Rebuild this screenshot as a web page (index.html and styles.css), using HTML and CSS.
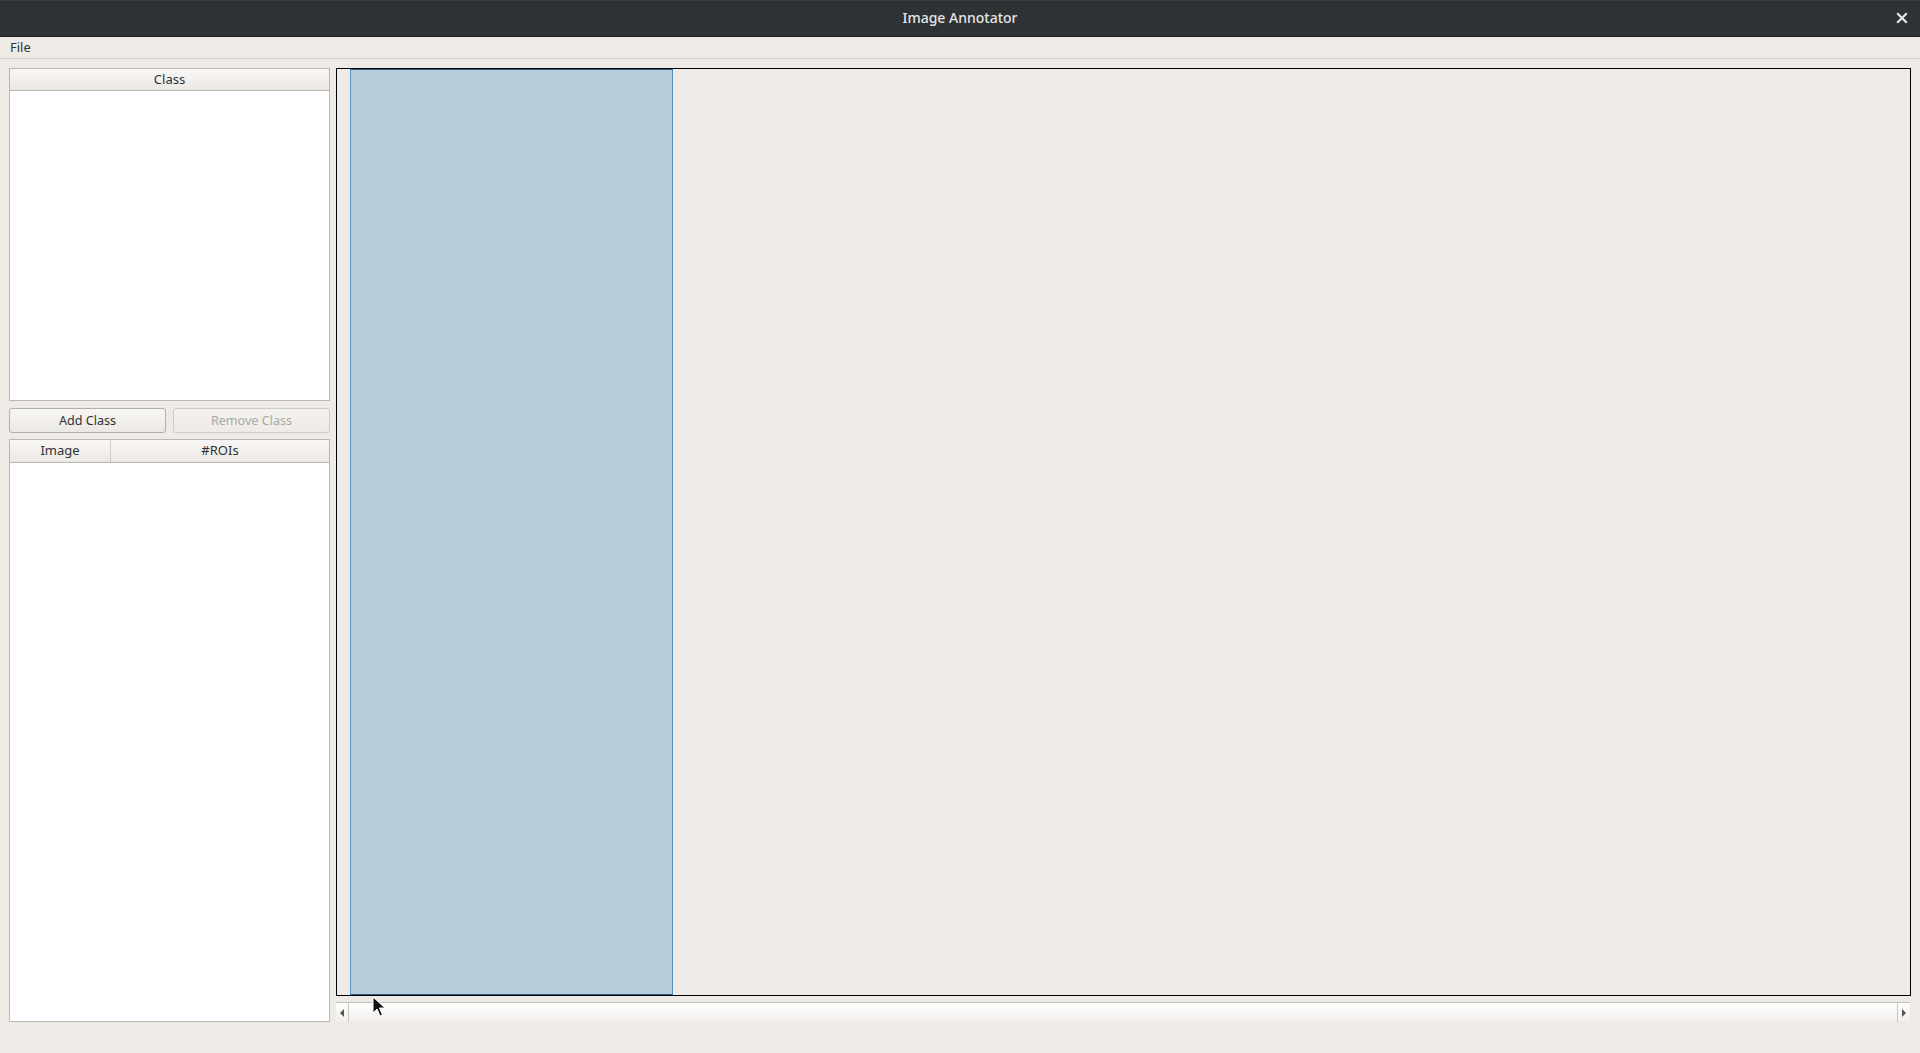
FILE: index.html
```html
<!DOCTYPE html>
<html lang="en">
<head>
    <meta charset="UTF-8">
    <meta name="viewport" content="width=device-width, initial-scale=1.0">
    <title>Image Annotator</title>
    <link rel="stylesheet" href="styles.css">
</head>
<body>
    <div class="titlebar">
        <span class="title">Image Annotator</span>
        <svg class="close-btn" width="12" height="12" viewBox="0 0 12 12">
            <path d="M2 2 L10 10 M10 2 L2 10" stroke="#e6e6e4" stroke-width="2.2" stroke-linecap="square"/>
        </svg>
    </div>
    <div class="menubar">
        <span class="menu-item">File</span>
    </div>
    <div class="main">
        <div class="side">
            <div class="class-list">
                <div class="header">
                    <div class="header-cell">Class</div>
                </div>
                <div class="list-body"></div>
            </div>
            <div class="button-row">
                <button class="btn">Add Class</button>
                <button class="btn" disabled>Remove Class</button>
            </div>
            <div class="image-table">
                <div class="header">
                    <div class="header-cell col-image">Image</div>
                    <div class="header-cell col-rois">#ROIs</div>
                </div>
                <div class="list-body"></div>
            </div>
        </div>
        <div class="view">
            <div class="canvas">
                <div class="roi"></div>
            </div>
            <div class="hscroll">
                <div class="scroll-btn left"><span class="arrow-left"></span></div>
                <div class="scroll-track"></div>
                <div class="scroll-btn right"><span class="arrow-right"></span></div>
            </div>
        </div>
    </div>
    <svg class="cursor" width="14" height="22" viewBox="0 0 14 22">
        <path d="M1 1 L1 17 L5 13 L8 20 L10.5 19 L7.5 12 L13 12 Z" fill="#111" stroke="#fff" stroke-width="1"/>
    </svg>
</body>
</html>
```

FILE: styles.css
```css
body {
    margin: 0;
    width: 1920px;
    height: 1053px;
    overflow: hidden;
    background: #eeebe7;
    font-family: "Noto Sans", "DejaVu Sans", sans-serif;
    font-size: 13px;
    color: #2e3436;
    display: flex;
    flex-direction: column;
    position: relative;
}
.titlebar {
    background: #2d3235;
    border-top: 1px solid #383d40;
    border-bottom: 1px solid #181a1b;
    box-sizing: border-box;
    height: 37px;
    display: flex;
    align-items: center;
    justify-content: center;
    position: relative;
}
.title {
    color: #e6e6e4;
    font-size: 14px;
    font-weight: 500;
    padding-bottom: 3px;
}
.close-btn {
    position: absolute;
    right: 12px;
    top: 11px;
}
.menubar {
    border-bottom: 1px solid #d5d1cb;
    display: flex;
    align-items: center;
    padding-left: 10px;
    padding-bottom: 2px;
    box-sizing: border-box;
    height: 22px;
}
.main {
    flex: 1;
    display: flex;
    gap: 6px;
    padding: 9px 9px 31px 9px;
    min-height: 0;
}
.side {
    width: 321px;
    display: flex;
    flex-direction: column;
}
.class-list {
    height: 333px;
    border: 1px solid #bbb8b3;
    box-sizing: border-box;
    background: white;
    display: flex;
    flex-direction: column;
}
.header {
    height: 21px;
    display: flex;
    background: linear-gradient(#f9f7f5, #ebe8e4);
    border-bottom: 1px solid #b9b6b1;
    flex-shrink: 0;
}
.header-cell {
    flex: 1;
    text-align: center;
    line-height: 20px;
}
.list-body {
    flex: 1;
    background: white;
}
.button-row {
    display: flex;
    gap: 7px;
    margin-top: 7px;
    height: 25px;
}
.btn {
    flex: 1;
    font-family: "Noto Sans", "DejaVu Sans", sans-serif;
    font-size: 12.6px;
    color: #2e3436;
    border: 1px solid #b3b0ab;
    border-radius: 3px;
    background: linear-gradient(#f7f6f4, #ebe8e4);
    padding: 0 0 1px 0;
}
.btn:disabled {
    color: #a8a8a6;
    border-color: #d0cdc8;
    background: linear-gradient(#f4f2ef, #eeebe7);
}
.image-table {
    margin-top: 6px;
    flex: 1;
    border: 1px solid #bbb8b3;
    box-sizing: border-box;
    background: white;
    display: flex;
    flex-direction: column;
}
.image-table .header {
    height: 22px;
}
.image-table .header-cell {
    line-height: 20px;
}
.col-image {
    flex: 0 0 100px;
    border-right: 1px solid #cfccc7;
}
.view {
    flex: 1;
    display: flex;
    flex-direction: column;
    gap: 6px;
}
.canvas {
    flex: 1;
    border: 1px solid #000;
    background: #eeebe7;
    display: flex;
    padding-left: 13px;
}
.roi {
    width: 321px;
    background: #b8cdda;
    border-left: 1px solid #5f95bf;
    border-right: 1px solid #5a92bd;
    border-top: 1px solid #2c5673;
    border-bottom: 1px solid #2c5673;
}
.hscroll {
    height: 20px;
    border-top: 1px solid #c3c0bb;
    box-sizing: border-box;
    background: linear-gradient(#fdfdfc, #f1efec);
    display: flex;
    margin-right: 1px;
}
.scroll-btn {
    width: 12px;
    display: flex;
    align-items: center;
    justify-content: center;
}
.scroll-btn.left {
    border-right: 1px solid #cac7c2;
}
.scroll-btn.right {
    border-left: 1px solid #cac7c2;
}
.scroll-track {
    flex: 1;
}
.arrow-left {
    width: 0;
    height: 0;
    border-top: 4px solid transparent;
    border-bottom: 4px solid transparent;
    border-right: 4px solid #555753;
}
.arrow-right {
    width: 0;
    height: 0;
    border-top: 4px solid transparent;
    border-bottom: 4px solid transparent;
    border-left: 4px solid #555753;
}
.cursor {
    position: absolute;
    left: 372px;
    top: 996px;
}
```
